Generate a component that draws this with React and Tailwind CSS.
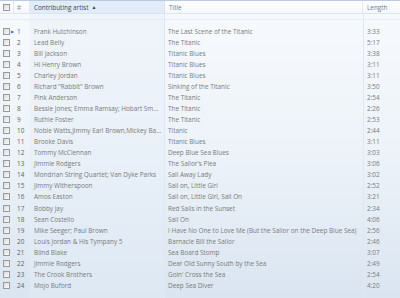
import React from 'react';

const tracks = [
  ['Frank Hutchinson', 'The Last Scene of the Titanic', '3:33'],
  ['Lead Belly', 'The Titanic', '5:17'],
  ['Bill Jackson', 'Titanic Blues', '3:38'],
  ['Hi Henry Brown', 'Titanic Blues', '3:11'],
  ['Charley Jordan', 'Titanic Blues', '3:11'],
  ['Richard "Rabbit" Brown', 'Sinking of the Titanic', '3:50'],
  ['Pink Anderson', 'The Titanic', '2:54'],
  ['Bessie Jones;  Emma Ramsay;  Hobart Sm...', 'The Titanic', '2:26'],
  ['Ruthie Foster', 'The Titanic', '2:53'],
  ['Noble Watts,Jimmy Earl Brown,Mickey Ba...', 'Titanic', '2:44'],
  ['Brooke Davis', 'Titanic Blues', '3:11'],
  ['Tommy McClennan', 'Deep Blue Sea Blues', '3:03'],
  ['Jimmie Rodgers', "The Sailor's Plea", '3:06'],
  ['Mondrian String Quartet;  Van Dyke Parks', 'Sail Away Lady', '3:02'],
  ['Jimmy Witherspoon', 'Sail on, Little Girl', '2:52'],
  ['Amos Easton', 'Sail on, Little Girl, Sail On', '3:21'],
  ['Bobby Jay', 'Red Sails in the Sunset', '2:34'],
  ['Sean Costello', 'Sail On', '4:06'],
  ['Mike Seeger;  Paul Brown', 'I Have No One to Love Me (But the Sailor on the Deep Blue Sea)', '2:56'],
  ['Louis Jordan & His Tympany 5', 'Barnacle Bill the Sailor', '2:46'],
  ['Blind Blake', 'Sea Board Stomp', '3:07'],
  ['Jimmie Rodgers', 'Dear Old Sunny South by the Sea', '2:49'],
  ['The Crook Brothers', "Goin' Cross the Sea", '2:54'],
  ['Mojo Buford', 'Deep Sea Diver', '4:20'],
];

function Box() {
  return (
    <span className="block w-[7px] h-[7px] border border-[#9a9a9a] bg-gradient-to-br from-[#dcdcdc] to-[#fafafa]" />
  );
}

export default function App() {
  return (
    <div
      className="relative w-[400px] h-[298px] overflow-hidden bg-gradient-to-b from-[#f8fafd] via-[#edf3f9] to-[#dae5f1] text-[6.4px] text-[#7a7a7a] whitespace-nowrap"
      style={{ fontFamily: '"Open Sans", "Noto Sans", sans-serif' }}
    >
      {/* column guide lines */}
      <div className="absolute left-[30px] top-[14px] bottom-0 w-[135px] bg-[#e4edf8]/40 border-r border-[#dfe8f2]" />
      <div className="absolute left-[363px] top-[14px] bottom-0 w-px bg-[#dfe8f2]" />

      <div className="relative">
        {/* header */}
        <div className="h-[14px] flex leading-[13px] border-t border-[#b9cbe0] border-b border-b-[#dbe5f0] bg-gradient-to-b from-white to-[#f4f7fb]">
          <div className="w-[14px] flex items-center pl-[3px] border-r border-[#e1e8f0]">
            <Box />
          </div>
          <div className="w-[16px] flex items-center pl-[3px] border-r border-[#e1e8f0] text-[#8a94a2]">#</div>
          <div className="w-[135px] flex items-center pl-[4px] border-r border-[#d5e2f1] bg-[#e1ecf8] text-[#34465c]">
            Contributing artist
            <span className="ml-[3px] text-[5px] text-[#34465c]">▲</span>
          </div>
          <div className="w-[198px] flex items-center pl-[4px] border-r border-[#e1e8f0] text-[#6e7c8e]">Title</div>
          <div className="flex-1 flex items-center pl-[4px] text-[#6e7c8e]">Length</div>
        </div>

        <div className="h-[6px] border-b border-[#e3ebf4]" />

        {/* rows */}
        <div className="pt-[6px]">
          {tracks.map(([artist, title, len], i) => (
            <div key={i} className="h-[11.04px] leading-[11px] flex items-center">
              <div className="w-[14px] flex items-center pl-[3px] relative">
                <Box />
                {i === 0 && (
                  <span className="absolute left-[11px] top-[-2px] text-[4px] text-[#2f6fd6]">▶</span>
                )}
              </div>
              <div className={`w-[16px] pl-[3px] ${i === 0 ? 'text-[#2f6fd6]' : 'text-[#5f5f5f]'}`}>{i + 1}</div>
              <div className="w-[135px] pl-[4px]">{artist}</div>
              <div className="w-[198px] pl-[3px]">{title}</div>
              <div className="flex-1 pl-[4px]">{len}</div>
            </div>
          ))}
        </div>
      </div>
    </div>
  );
}
